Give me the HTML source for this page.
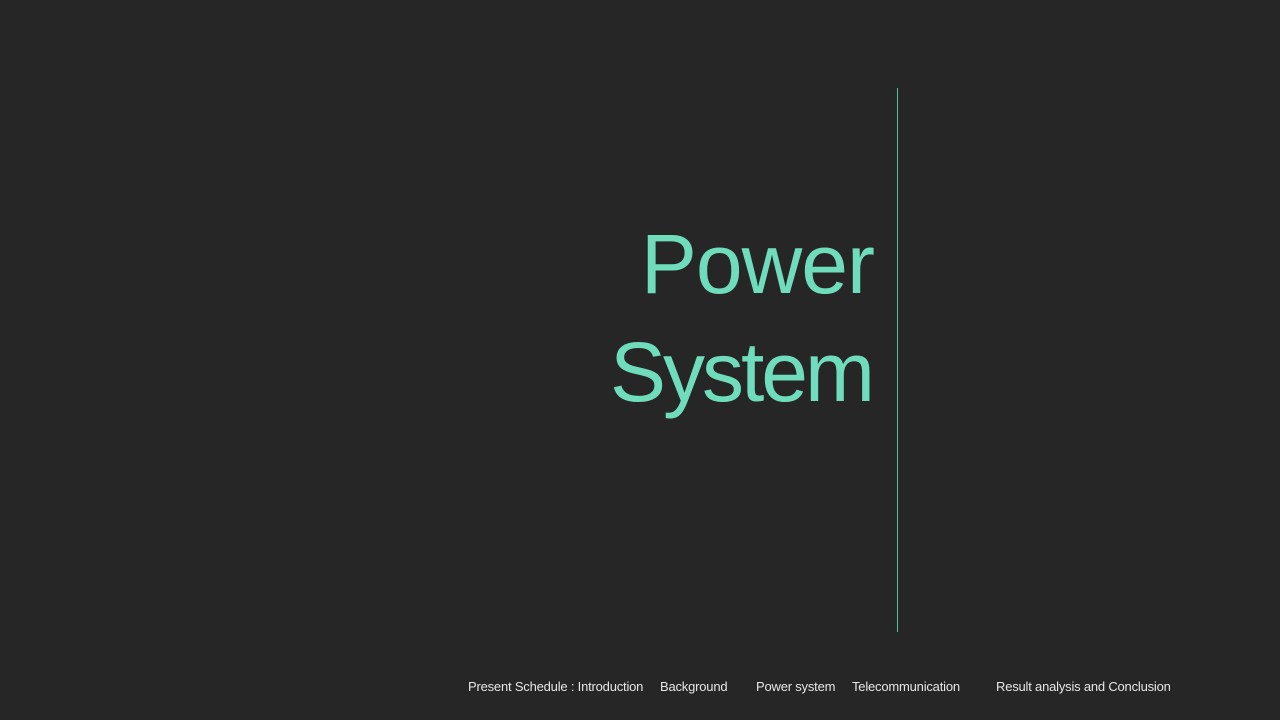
<!DOCTYPE html>
<html><head><meta charset="utf-8"><style>
html,body{margin:0;padding:0;}
body{width:1280px;height:720px;background:#262626;position:relative;overflow:hidden;font-family:"Liberation Sans",sans-serif;}
.t{position:absolute;right:406px;color:#6fdcbc;font-size:84px;line-height:1;white-space:nowrap;letter-spacing:-1px;font-weight:300;}
.line{position:absolute;left:897px;top:88px;width:1px;height:544px;background:#4fc0a0;}
.f{position:absolute;top:679px;font-size:13px;color:#e6e6e6;white-space:nowrap;letter-spacing:-0.2px;}
</style></head><body>
<div class="t" style="top:222px">Power</div>
<div class="t" style="top:330px;letter-spacing:-3px;right:408px">System</div>
<div class="line"></div>
<div class="f" style="left:468px">Present Schedule : Introduction</div>
<div class="f" style="left:660px">Background</div>
<div class="f" style="left:756px">Power system</div>
<div class="f" style="left:852px">Telecommunication</div>
<div class="f" style="left:996px">Result analysis and Conclusion</div>
</body></html>
